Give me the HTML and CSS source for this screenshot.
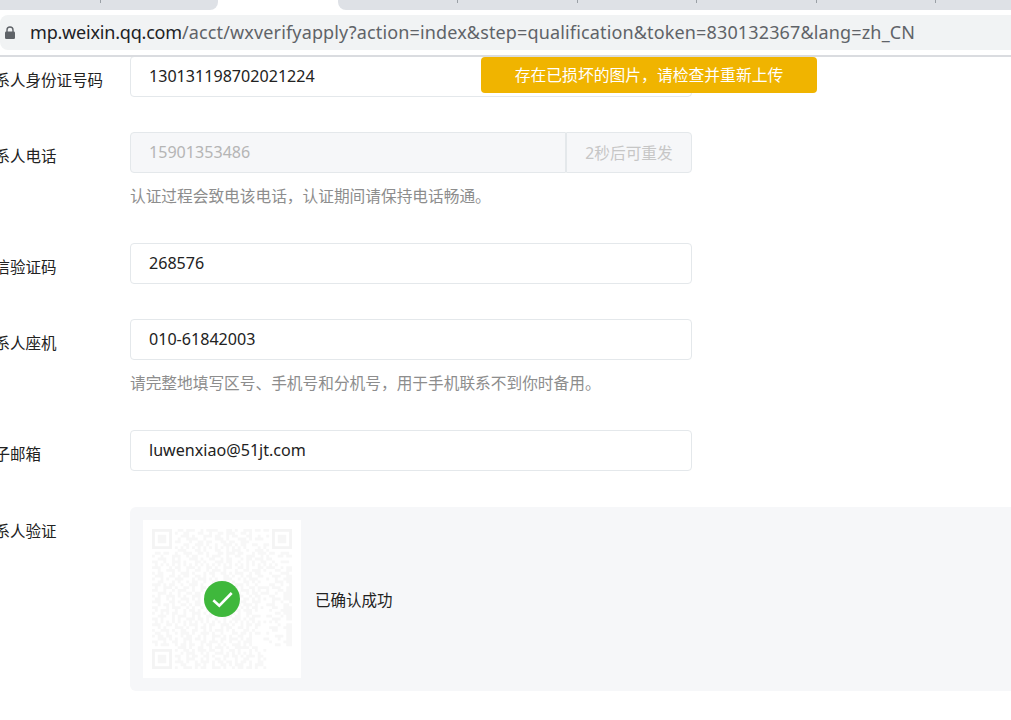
FILE: index.html
```html
<!DOCTYPE html>
<html lang="zh-CN">
<head>
<meta charset="utf-8">
<title>微信认证</title>
<link rel="stylesheet" href="styles.css">
</head>
<body>
<header class="chrome">
  <div class="tabs">
    <div class="tab tab-left"><i class="sep"></i></div>
    <div class="tab-active"></div>
    <div class="tab tab-right"><i class="sep"></i><i class="sep"></i><i class="sep"></i><i class="sep"></i><i class="sep"></i></div>
  </div>
  <div class="address">
    <svg class="lock" viewBox="0 0 12 13" width="12" height="13"><path d="M3 6V4a3 3 0 0 1 6 0v2" fill="none" stroke="#5f6368" stroke-width="1.4"/><rect x="1" y="5.5" width="10" height="7.5" rx="1.2" fill="#5f6368"/></svg>
    <span class="url"><span class="host">mp.weixin.qq.com</span>/acct/wxverifyapply?action=index&amp;step=qualification&amp;token=830132367&amp;lang=zh_CN</span>
  </div>
</header>

<main class="form">
  <div class="toast">存在已损坏的图片，请检查并重新上传</div>

  <div class="row">
    <label class="label">联系人身份证号码</label>
    <div class="field"><input class="input" value="130131198702021224"></div>
  </div>

  <div class="row">
    <label class="label">联系人电话</label>
    <div class="field">
      <div class="group">
        <input class="input input-off" value="15901353486" disabled>
        <button class="resend" disabled>2秒后可重发</button>
      </div>
      <p class="note">认证过程会致电该电话，认证期间请保持电话畅通。</p>
    </div>
  </div>

  <div class="row">
    <label class="label">短信验证码</label>
    <div class="field"><input class="input" value="268576"></div>
  </div>

  <div class="row">
    <label class="label">联系人座机</label>
    <div class="field">
      <input class="input" value="010-61842003">
      <p class="note">请完整地填写区号、手机号和分机号，用于手机联系不到你时备用。</p>
    </div>
  </div>

  <div class="row">
    <label class="label">电子邮箱</label>
    <div class="field"><input class="input" value="luwenxiao@51jt.com"></div>
  </div>

  <div class="row row-last">
    <label class="label">联系人验证</label>
    <div class="panel">
      <div class="qr">
        <svg class="qr-code" viewBox="0 0 49 49" width="140" height="140">
          <path class="finder" d="M.5 .5h6v6h-6zM42.500 .5h6v6h-6zM.5 42.500h6v6h-6z"/>
          <path class="finder-core" d="M2 2h3v3h-3zM44 2h3v3h-3zM2 44h3v3h-3z"/>
          <path class="modules" d="M9 .5h2m1 0h3m2 0h1m1 0h4m3 0h2m1 0h1m2 0h3
M8 1.500h1m2 0h2m3 0h2m2 0h1m2 0h2m1 0h3m2 0h2m1 0h1
M10 2.500h3m1 0h1m3 0h3m1 0h2m2 0h1m1 0h2m3 0h2
M9 3.500h1m2 0h4m2 0h1m3 0h3m1 0h1m3 0h3m1 0h1
M8 4.500h2m3 0h1m2 0h2m1 0h2m3 0h2m1 0h2m2 0h3
M11 5.500h2m2 0h3m1 0h1m2 0h1m2 0h3m1 0h1m1 0h2
M8 6.500h1m1 0h1m1 0h1m1 0h1m1 0h1m1 0h1m1 0h1m1 0h1m1 0h1m1 0h1m1 0h1m1 0h1m1 0h1
M9 7.500h3m3 0h2m1 0h1m3 0h2m2 0h1m1 0h3m2 0h1
M1 8.500h2m1 0h2m2 0h1m2 0h3m2 0h2m1 0h1m3 0h2m1 0h3m1 0h2m3 0h1m1 0h3m1 0h2
M0 9.500h1m2 0h1m3 0h3m2 0h1m1 0h2m3 0h1m1 0h3m2 0h1m2 0h2m2 0h3m2 0h1m1 0h1
M2 10.500h3m2 0h1m1 0h1m3 0h3m1 0h1m2 0h2m2 0h1m1 0h2m3 0h1m1 0h2m1 0h3m1 0h2
M0 11.500h2m2 0h1m2 0h3m1 0h1m3 0h2m1 0h1m3 0h3m1 0h2m2 0h1m2 0h1m1 0h1m2 0h2
M1 12.500h1m1 0h1m1 0h1m1 0h1m1 0h1m1 0h1m1 0h1m1 0h1m1 0h1m1 0h1m1 0h1m1 0h1m1 0h1m1 0h1m1 0h1m1 0h1m1 0h1m1 0h1m1 0h1m1 0h1m1 0h1m1 0h1
M0 13.500h3m3 0h1m1 0h2m2 0h3m1 0h1m2 0h2m1 0h1m2 0h3m2 0h2m1 0h1m3 0h2m1 0h1
M2 14.500h1m2 0h3m1 0h1m2 0h1m2 0h2m2 0h1m1 0h3m1 0h1m3 0h1m2 0h2m1 0h3m1 0h1
M0 15.500h1m1 0h2m3 0h1m2 0h3m1 0h1m3 0h1m1 0h2m2 0h2m1 0h1m1 0h3m2 0h1m1 0h2
M1 16.500h3m2 0h2m1 0h1m1 0h2m2 0h2m1 0h1m2 0h1m3 0h2m1 0h1m2 0h1m1 0h2m2 0h2
M0 17.500h1m2 0h1m1 0h1m2 0h3m3 0h1m1 0h3m1 0h1m1 0h1m2 0h3m2 0h1m1 0h1m1 0h3
M2 18.500h2m3 0h1m1 0h1m2 0h1m1 0h2m2 0h1m2 0h2m1 0h2m2 0h1m3 0h2m1 0h1m1 0h1
M0 19.500h3m1 0h1m1 0h2m2 0h1m2 0h3m1 0h1m3 0h1m1 0h2m1 0h1m2 0h3m1 0h1m2 0h1
M1 20.500h1m2 0h3m1 0h1m2 0h2m1 0h1m2 0h2m6 0h1m2 0h2m1 0h1m2 0h2m1 0h2
M0 21.500h2m2 0h1m2 0h1m1 0h3m2 0h1m2 0h1m7 0h2m1 0h1m2 0h3m1 0h1m1 0h1
M2 22.500h3m1 0h1m2 0h1m2 0h2m1 0h2m9 0h1m1 0h3m2 0h1m1 0h2m1 0h1
M0 23.500h1m1 0h1m2 0h3m1 0h1m1 0h1m2 0h3m8 0h2m1 0h1m1 0h2m2 0h1m1 0h2
M1 24.500h2m2 0h1m1 0h1m2 0h3m1 0h1m1 0h1m8 0h1m2 0h2m2 0h2m1 0h1m1 0h1
M0 25.500h3m3 0h2m1 0h1m2 0h1m2 0h2m8 0h3m1 0h1m1 0h2m2 0h3
M2 26.500h1m1 0h2m1 0h1m2 0h2m1 0h1m1 0h2m7 0h1m2 0h1m2 0h1m1 0h3m1 0h1
M0 27.500h2m3 0h1m1 0h3m2 0h1m1 0h1m2 0h1m5 0h2m1 0h3m2 0h1m1 0h1m1 0h2
M1 28.500h1m1 0h3m2 0h1m2 0h1m1 0h2m1 0h1m2 0h3m2 0h1m1 0h1m2 0h2m1 0h3m1 0h1
M0 29.500h1m2 0h1m1 0h1m1 0h2m2 0h1m2 0h3m1 0h1m1 0h2m1 0h1m3 0h2m1 0h1m2 0h2
M2 30.500h3m2 0h1m1 0h3m2 0h1m1 0h1m2 0h2m2 0h1m1 0h3m1 0h2m2 0h1m1 0h3
M0 31.500h2m1 0h1m3 0h1m1 0h1m2 0h3m1 0h2m1 0h1m2 0h1m2 0h1m2 0h3m1 0h1m1 0h2
M1 32.500h1m1 0h1m1 0h1m1 0h1m1 0h1m1 0h1m1 0h1m1 0h1m1 0h1m1 0h1m1 0h1m1 0h1m1 0h1m1 0h1m1 0h1m1 0h1m1 0h1m1 0h1m1 0h1m1 0h1m1 0h1m1 0h1
M0 33.500h3m2 0h2m1 0h1m2 0h1m1 0h3m2 0h1m1 0h2m2 0h3m1 0h1m2 0h1m1 0h2m1 0h2
M2 34.500h1m1 0h1m3 0h3m1 0h1m2 0h1m1 0h2m1 0h1m3 0h1m1 0h2m2 0h2m1 0h1m2 0h1
M0 35.500h1m2 0h3m1 0h1m2 0h2m2 0h2m2 0h1m1 0h1m1 0h3m1 0h1m1 0h1m3 0h2m1 0h1
M1 36.500h2m2 0h1m2 0h1m1 0h3m1 0h1m2 0h3m1 0h1m2 0h1m3 0h2m1 0h2m1 0h1m1 0h2
M0 37.500h1m1 0h2m1 0h2m3 0h1m1 0h2m2 0h1m1 0h1m2 0h3m1 0h1m1 0h1m2 0h2m2 0h1
M2 38.500h3m1 0h1m1 0h1m2 0h3m1 0h2m1 0h1m2 0h1m2 0h2m1 0h3m1 0h1m1 0h2
M0 39.500h2m2 0h1m2 0h2m2 0h1m1 0h1m3 0h2m1 0h3m1 0h1m2 0h1m2 0h1m1 0h3
M1 40.500h1m1 0h3m2 0h1m1 0h2m1 0h2m2 0h1m1 0h2m2 0h1m1 0h1m2 0h3m1 0h1m1 0h1
M9 41.500h3m1 0h1m2 0h2m2 0h1m1 0h3m1 0h1m2 0h5m1 0h2
M8 42.500h1m2 0h2m1 0h1m1 0h3m1 0h2m2 0h1m2 0h2m1 0h1m3 0h1m1 0h1m2 0h1
M10 43.500h1m1 0h3m2 0h1m1 0h1m2 0h3m1 0h1m1 0h1m1 0h1m1 0h1m1 0h1m2 0h1
M8 44.500h2m2 0h1m1 0h2m2 0h2m1 0h1m3 0h2m1 0h2m1 0h1m1 0h3m1 0h2
M9 45.500h1m2 0h3m2 0h1m1 0h1m2 0h2m1 0h1m3 0h1m2 0h2m3 0h1m1 0h1
M8 46.500h3m1 0h1m2 0h1m1 0h3m1 0h1m1 0h2m1 0h2m1 0h1m1 0h2m1 0h1m2 0h2
M10 47.500h2m3 0h2m1 0h1m2 0h1m2 0h2m1 0h1m1 0h3m2 0h1m1 0h3
M8 48.500h1m2 0h3m1 0h1m1 0h2m2 0h3m1 0h1m2 0h1m1 0h2m1 0h2m1 0h1m2 0h1
M36 .5h2m1 0h2M37 2.500h1m2 0h1M36 3.500h3M35 5.500h2m2 0h2M37 6.500h1m1 0h1M36 7.500h3m1 0h1
M41 8.500h2m2 0h3M44 9.500h2m1 0h2M42 11.500h1m2 0h3M40 13.500h3m2 0h1m1 0h2M43 14.500h2m2 0h2M41 15.500h1m3 0h3
M42 16.500h3m2 0h2M40 17.500h1m2 0h1m2 0h3M43 18.500h3m1 0h2M41 19.500h2m2 0h1m2 0h1M39 20.500h2m1 0h3m2 0h2M40 21.500h1m3 0h2m1 0h2
M38 22.500h3m2 0h1m2 0h3M41 23.500h2m3 0h3M39 24.500h1m2 0h3m1 0h3M42 25.500h1m2 0h1m2 0h1M40 26.500h3m3 0h2M38 27.500h1m3 0h2m2 0h3
M41 28.500h1m3 0h4M43 29.500h2m1 0h3M40 30.500h2m3 0h1m1 0h2M42 31.500h3m2 0h2M44 33.500h1m2 0h2M41 34.500h3m2 0h3
M42 35.500h2m3 0h2M40 36.500h1m6 0h2M43 37.500h3m1 0h2M39 38.500h2m3 0h1m2 0h2M41 39.500h1m4 0h3M43 40.500h2m2 0h2"/>
        </svg>
        <svg class="qr-ok" viewBox="0 0 36 36" width="36" height="36"><circle cx="18" cy="18" r="18" fill="#3fb83c"/><path d="M9.300 19.300l6 5.400 12.400-12.700" fill="none" stroke="#fff" stroke-width="2.600"/></svg>
      </div>
      <span class="status">已确认成功</span>
    </div>
  </div>
</main>
</body>
</html>
```

FILE: styles.css
```css
* { box-sizing: border-box; }
html, body { margin: 0; padding: 0; }
body {
  width: 1011px;
  height: 720px;
  overflow: hidden;
  background: #fff;
  font-family: "Noto Sans", "Noto Sans CJK SC", sans-serif;
  font-size: 15.5px;
  color: #222;
}

/* browser chrome */
.chrome {
  position: relative;
  z-index: 3;
  height: 57px;
  margin-bottom: -1px;
  border-bottom: 2px solid #dadce0;
}
.tabs { display: flex; height: 10px; }
.tab { background: #dee1e6; height: 10px; display: flex; }
.tab-left { width: 218px; border-bottom-right-radius: 8px; padding-left: 100px; }
.tab-active { width: 120px; }
.tab-right { flex: 1; border-bottom-left-radius: 8px; padding-left: 119px; gap: 118.500px; }
.sep { width: 1px; height: 3px; background: #9aa0a6; }

.address {
  height: 35px;
  margin-top: 5px;
  background: #f1f3f4;
  border-radius: 8px 0 0 8px;
  display: flex;
  align-items: center;
  padding-left: 4px;
}
.lock { flex: none; }
.url {
  margin: -2px 0 0 14px;
  font-size: 18px;
  letter-spacing: 0.146px;
  color: #5f6368;
  white-space: nowrap;
}
.host { color: #202124; letter-spacing: -0.2px; }

/* form */
.form { position: relative; margin-left: -21px; }
.row { display: flex; margin-bottom: 35.500px; }
.row-last { margin-top: 36.500px; margin-bottom: 0; }
.label {
  width: 151px;
  flex: none;
  padding-top: 8px;
  line-height: 32px;
  color: #222;
  white-space: nowrap;
}
.field { width: 562px; flex: none; }
.input {
  display: block;
  width: 100%;
  height: 40.500px;
  padding: 0 18px;
  border: 1px solid #e4e8eb;
  border-radius: 4px;
  background: #fff;
  color: #222;
  font: inherit;
  font-size: 16.100px;
  outline: none;
}
.input-off {
  width: 436px;
  flex: none;
  background: #f6f7f9;
  color: #b5b5b5;
  -webkit-text-fill-color: #b5b5b5;
  opacity: 1;
  border-radius: 4px 0 0 4px;
}
.group { display: flex; height: 40.500px; }
.resend {
  flex: 1;
  height: 41px;
  border: 1px solid #e4e8eb;
  border-radius: 0 4px 4px 0;
  background: #f6f7f9;
  color: #c6c6c6;
  font: inherit;
  font-size: 15.700px;
  padding: 0;
}
.note {
  margin: 11px 0 0;
  font-size: 15.700px;
  line-height: 24px;
  color: #8d8d8d;
  white-space: nowrap;
}

.panel {
  flex: 1;
  height: 184px;
  padding: 13px;
  background: #f6f7f9;
  border-radius: 6px 0 0 6px;
  display: flex;
  align-items: center;
  gap: 14px;
}
.qr {
  position: relative;
  width: 158px;
  height: 158px;
  flex: none;
  background: #fff;
  display: flex;
  align-items: center;
  justify-content: center;
}
.qr-code { display: block; }
.qr-ok { position: absolute; left: 61px; top: 61px; }
.finder { fill: none; stroke: #f4f4f4; stroke-width: 1; }
.finder-core { fill: #f6f6f6; }
.modules { fill: none; stroke: #f7f7f7; stroke-width: 1; }
.status { color: #222; }

.toast {
  position: absolute;
  left: 502px;
  top: 1px;
  width: 336px;
  height: 36px;
  line-height: 37px;
  text-align: center;
  font-size: 15.800px;
  background: #f0b400;
  color: #fff;
  border-radius: 4px;
  z-index: 2;
}
```
